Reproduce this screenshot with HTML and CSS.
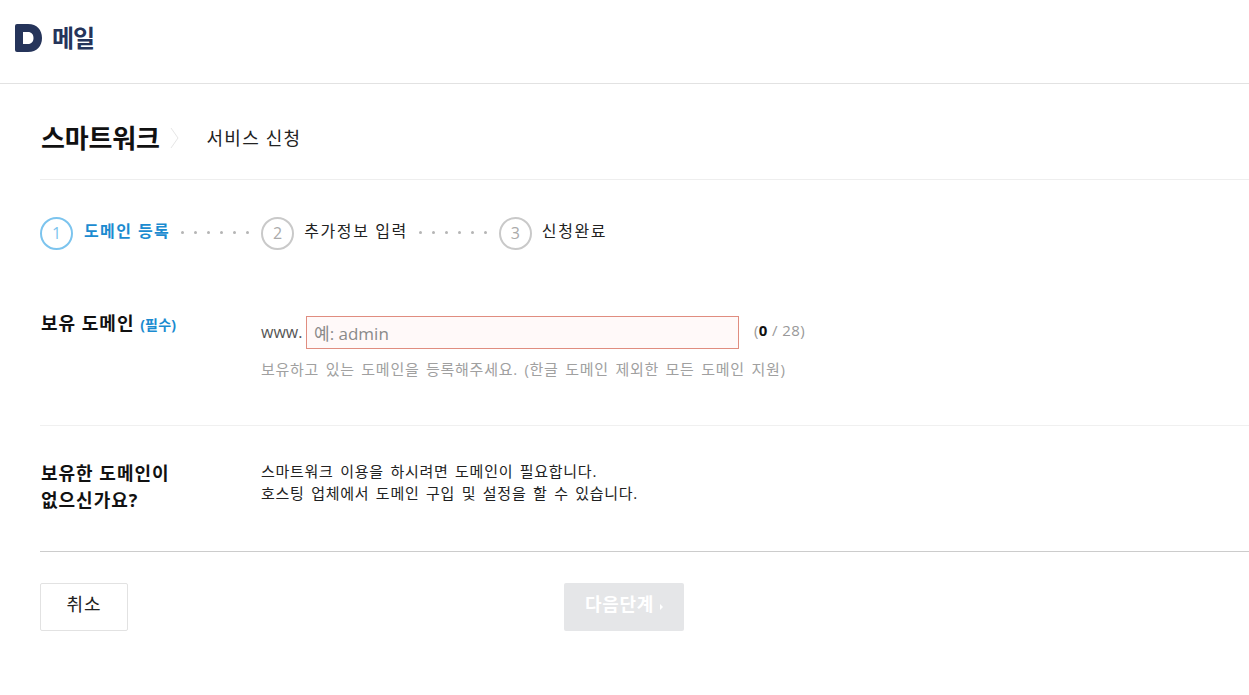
FILE: index.html
```html
<!DOCTYPE html>
<html lang="ko">
<head>
<meta charset="utf-8">
<title>스마트워크 서비스 신청</title>
<link rel="stylesheet" href="styles.css">
</head>
<body>
<header class="top">
  <svg class="logo" viewBox="0 0 27 28" width="27" height="28"><path fill="#25345a" fill-rule="evenodd" d="M0 2Q0 0 2 0H13C22 0 27 6 27 14C27 22 22 28 13 28H2Q0 28 0 26ZM8 8V20H13C16.500 20 18.500 17.500 18.500 14C18.500 10.500 16.500 8 13 8Z"/></svg>
  <span class="brand">메일</span>
</header>
<main class="content">
  <div class="title-row">
    <h1 class="title">스마트워크</h1>
    <svg class="crumb" viewBox="0 0 9 22" width="9" height="22"><path d="M1 1L8 11L1 21" fill="none" stroke="#e6e6e6" stroke-width="1"/></svg>
    <span class="subtitle">서비스 신청</span>
  </div>
  <ol class="steps">
    <li class="step active"><span class="num">1</span><span class="step-label">도메인 등록</span></li>
    <li class="dots" aria-hidden="true"><i></i><i></i><i></i><i></i><i></i><i></i></li>
    <li class="step"><span class="num">2</span><span class="step-label">추가정보 입력</span></li>
    <li class="dots" aria-hidden="true"><i></i><i></i><i></i><i></i><i></i><i></i></li>
    <li class="step"><span class="num">3</span><span class="step-label">신청완료</span></li>
  </ol>
  <section class="row domain-row">
    <h2 class="row-label">보유 도메인 <em class="req">(필수)</em></h2>
    <div class="row-body">
      <div class="field">
        <span class="www">www.</span>
        <input class="domain-input" type="text" placeholder="예: admin">
        <span class="count">(<b>0</b> / 28)</span>
      </div>
      <p class="hint">보유하고 있는 도메인을 등록해주세요. (한글 도메인 제외한 모든 도메인 지원)</p>
    </div>
  </section>
  <section class="row help-row">
    <h2 class="row-label help-label">보유한 도메인이<br>없으신가요?</h2>
    <p class="help-text">스마트워크 이용을 하시려면 도메인이 필요합니다.<br>호스팅 업체에서 도메인 구입 및 설정을 할 수 있습니다.</p>
  </section>
  <div class="actions">
    <button class="btn cancel" type="button"><span class="btn-text">취소</span></button>
    <button class="btn next" type="button"><span class="btn-text">다음단계</span><span class="arrow"></span></button>
  </div>
</main>
</body>
</html>
```
FILE: styles.css
```css
* { box-sizing: border-box; }
html, body { margin: 0; padding: 0; background: #fff; }
body {
  font-family: "Open Sans", "Noto Sans CJK KR", sans-serif;
  color: #111;
  overflow: hidden;
  height: 695px;
}
h1, h2, p, ol { margin: 0; padding: 0; }
.top {
  height: 84px;
  border-bottom: 1px solid #e2e2e2;
  display: flex;
  align-items: center;
  padding: 0 0 7px 15px;
  gap: 10px;
}
.logo { display: block; }
.brand { font-size: 24px; font-weight: 700; color: #25345a; line-height: 28px; letter-spacing: -1px; }
.content { padding-left: 40px; }
.title-row {
  height: 96px;
  border-bottom: 1px solid #eee;
  display: flex;
  align-items: center;
  padding: 13px 0 0 1px;
}
.title { font-size: 26px; font-weight: 700; letter-spacing: -0.2px; line-height: 30px; color: #111; }
.crumb { margin: 0 0 0 10px; }
.subtitle { margin-left: 28px; font-size: 18px; color: #222; line-height: 26px; letter-spacing: 1.2px; }
.steps {
  list-style: none;
  display: flex;
  align-items: center;
  height: 106px;
}
.step { display: flex; align-items: center; gap: 10px; }
.num {
  width: 33px; height: 33px;
  border-radius: 50%;
  border: 2px solid #c9c9c9;
  color: #aaa;
  font-size: 16px;
  display: flex; align-items: center; justify-content: center;
  flex: none;
}
.step-label { font-size: 16px; color: #222; margin-top: -4px; letter-spacing: 1.6px; line-height: 22px; }
.step.active .num { border-color: #7cc4ee; color: #7cc4ee; }
.step.active .step-label { color: #1b8bd0; font-weight: 700; margin-left: 1px; letter-spacing: 1.4px; }
.dots { display: flex; gap: 10px; margin: -2px 12px 0 11px; }
.dots i { display: block; width: 3px; height: 3px; background: #b5b5b5; border-radius: 50%; }
.row { display: flex; border-bottom: 1px solid #f0f0f0; }
.domain-row { height: 140px; padding-top: 24px; }
.row-label { width: 221px; padding-left: 1px; font-size: 18px; font-weight: 700; line-height: 26px; flex: none; color: #111; letter-spacing: 1px; }
.req { font-style: normal; font-size: 14px; color: #1b8bd0; font-weight: 700; letter-spacing: 0.2px; }
.row-body { flex: 1; }
.field { display: flex; align-items: center; height: 34px; margin-top: 5px; }
.www { font-size: 16px; color: #555; margin-right: 4px; width: 41px; }
.domain-input {
  width: 433px; height: 33px;
  border: 1px solid #e08d80;
  background: #fff9f9;
  padding: 2px 7px 0;
  font-family: "Open Sans", "Noto Sans CJK KR", sans-serif;
  font-size: 17px;
  outline: none;
  border-radius: 0;
}
.domain-input::placeholder { color: #8a8a8a; opacity: 1; }
.count { margin: -4px 0 0 15px; font-size: 15px; color: #999; letter-spacing: 0.4px; }
.count b { color: #111; font-weight: 700; }
.hint { margin-top: 9px; font-size: 15px; color: #a0a0a0; line-height: 22px; letter-spacing: 0.72px; word-spacing: 2px; }
.help-row { height: 126px; padding-top: 34px; border-bottom: 1px solid #ccc; }
.help-label { line-height: 27px; }
.help-text { font-size: 15px; line-height: 22px; color: #222; letter-spacing: 0.72px; word-spacing: 2px; }
.actions { display: flex; padding-top: 31px; }
.btn { font-family: "Open Sans", "Noto Sans CJK KR", sans-serif; border-radius: 2px; height: 48px; padding: 0; }
.btn-text { display: block; margin-top: -6px; line-height: 26px; }
.cancel { width: 88px; border: 1px solid #e2e2e2; background: #fff; color: #222; font-size: 18px; letter-spacing: 1px; }
.next {
  width: 120px; margin-left: 436px; border: 0;
  background: #e5e6e8; color: #fff; font-size: 18px; font-weight: 700; letter-spacing: 0.7px;
  display: flex; align-items: center; justify-content: center; gap: 6px;
}
.arrow { display: block; width: 0; height: 0; margin-top: 0; border-left: 3px solid #fff; border-top: 3px solid transparent; border-bottom: 3px solid transparent; }
```
